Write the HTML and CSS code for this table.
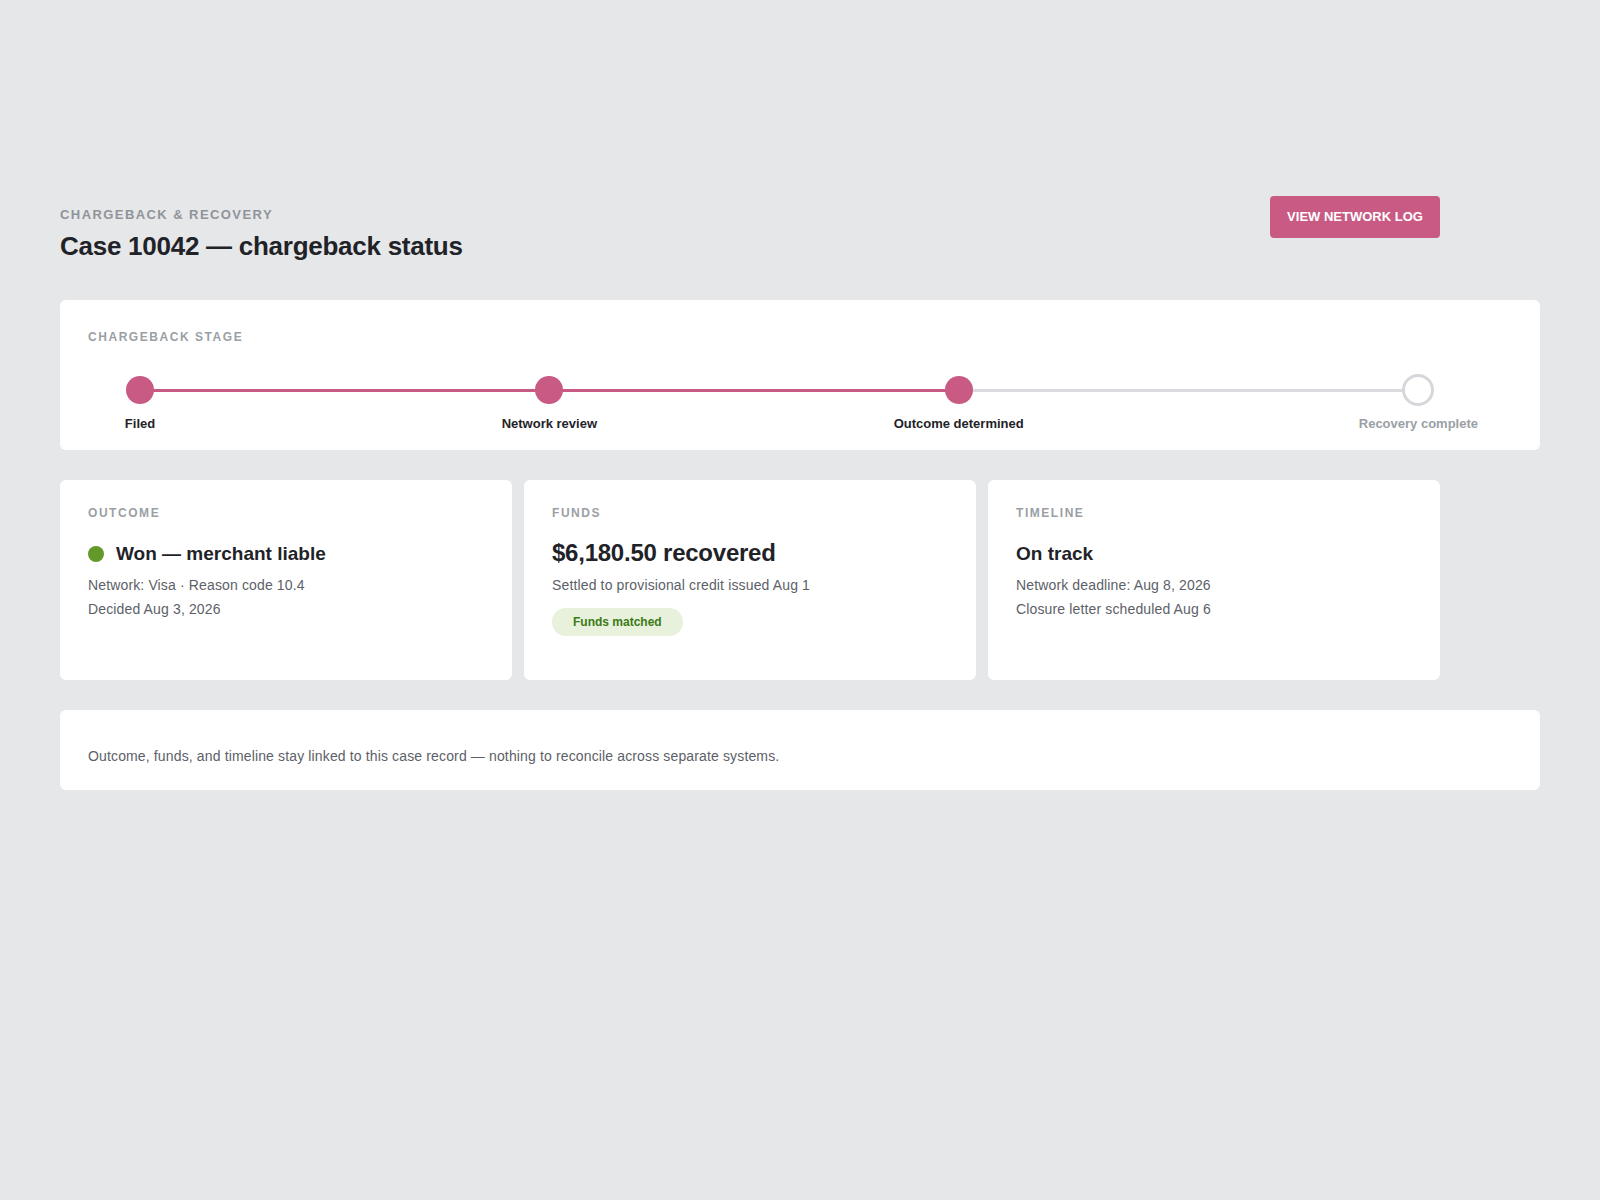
FILE: index.html
```html
<!DOCTYPE html>
<html lang="en">
<head>
<meta charset="utf-8">
<title>Case 10042 — chargeback status</title>
<link rel="stylesheet" href="styles.css">
</head>
<body>
<main class="page">
  <header class="header">
    <div class="header-text">
      <div class="kicker">CHARGEBACK &amp; RECOVERY</div>
      <h1 class="title">Case 10042 — chargeback status</h1>
    </div>
    <button class="btn-primary" type="button">VIEW NETWORK LOG</button>
  </header>

  <section class="panel stage-panel">
    <div class="eyebrow">CHARGEBACK STAGE</div>
    <div class="stepper">
      <div class="track"><div class="track-fill" style="width:64.05%"></div></div>
      <div class="step done">
        <div class="dot-row"><span class="circle"></span></div>
        <div class="step-label">Filed</div>
      </div>
      <div class="step done">
        <div class="dot-row"><span class="circle"></span></div>
        <div class="step-label">Network review</div>
      </div>
      <div class="step done">
        <div class="dot-row"><span class="circle"></span></div>
        <div class="step-label">Outcome determined</div>
      </div>
      <div class="step pending last">
        <div class="dot-row"><span class="circle"></span></div>
        <div class="step-label">Recovery complete</div>
      </div>
    </div>
  </section>

  <section class="cards">
    <article class="panel card">
      <div class="eyebrow">OUTCOME</div>
      <div class="card-title-row">
        <span class="status-dot"></span>
        <span class="card-title">Won — merchant liable</span>
      </div>
      <p class="card-text">Network: Visa · Reason code 10.4</p>
      <p class="card-text">Decided Aug 3, 2026</p>
    </article>
    <article class="panel card">
      <div class="eyebrow">FUNDS</div>
      <div class="card-title-row">
        <span class="card-amount">$6,180.50 recovered</span>
      </div>
      <p class="card-text">Settled to provisional credit issued Aug 1</p>
      <span class="pill">Funds matched</span>
    </article>
    <article class="panel card">
      <div class="eyebrow">TIMELINE</div>
      <div class="card-title-row">
        <span class="card-title">On track</span>
      </div>
      <p class="card-text">Network deadline: Aug 8, 2026</p>
      <p class="card-text">Closure letter scheduled Aug 6</p>
    </article>
  </section>

  <section class="panel note">
    <p class="note-text">Outcome, funds, and timeline stay linked to this case record — nothing to reconcile across separate systems.</p>
  </section>
</main>
</body>
</html>
```

FILE: styles.css
```css
* { box-sizing: border-box; }

html, body {
  margin: 0;
  padding: 0;
  background: #e6e7e9;
}

body {
  font-family: "Liberation Sans", Arial, sans-serif;
  color: #1f2328;
}

.page {
  padding: 196px 60px 60px;
}

.header {
  width: 1380px;
  display: flex;
  justify-content: space-between;
  align-items: flex-start;
}

.header-text {
  padding-top: 11px;
}

.kicker {
  font-size: 13px;
  line-height: 16px;
  font-weight: 700;
  letter-spacing: 0.11em;
  color: #8f949a;
}

.title {
  margin: 7px 0 0;
  font-size: 26px;
  line-height: 32px;
  font-weight: 700;
  letter-spacing: -0.01em;
  color: #1f2328;
}

.btn-primary {
  font-family: "Liberation Sans", Arial, sans-serif;
  font-size: 13px;
  line-height: 16px;
  font-weight: 700;
  color: #ffffff;
  background: #c85a84;
  border: 0;
  border-radius: 4px;
  padding: 13px 17px;
  width: 170px;
  height: 42px;
  cursor: pointer;
}

.panel {
  background: #ffffff;
  border-radius: 6px;
}

.eyebrow {
  font-size: 12px;
  line-height: 16px;
  font-weight: 700;
  letter-spacing: 1.55px;
  color: #9a9fa5;
}

/* Stage panel */
.stage-panel {
  margin-top: 38px;
  padding: 29px 28px 18px;
}

.stepper {
  position: relative;
  margin-top: 29px;
  display: grid;
  grid-template-columns: repeat(3, 1fr) 196px;
}

.track {
  position: absolute;
  left: 52px;
  right: 93.25px;
  top: 14.5px;
  height: 3px;
  background: #d9dbde;
}

.track-fill {
  height: 100%;
  background: #c85a84;
}

.step {
  position: relative;
  width: 104px;
  display: flex;
  flex-direction: column;
  align-items: center;
}

.step.last {
  width: auto;
  justify-self: end;
  margin-right: 34px;
}

.dot-row {
  height: 32px;
  display: flex;
  align-items: center;
  justify-content: center;
}

.circle {
  display: block;
  width: 28px;
  height: 28px;
  border-radius: 50%;
  background: #c85a84;
}

.step.pending .circle {
  box-sizing: content-box;
  width: 26px;
  height: 26px;
  background: #ffffff;
  border: 3px solid #d5d7db;
}

.step-label {
  margin-top: 10px;
  font-size: 13px;
  line-height: 16px;
  font-weight: 700;
  white-space: nowrap;
  color: #1f2328;
}

.step.pending .step-label {
  color: #9a9fa5;
}

/* Cards */
.cards {
  width: 1380px;
  margin-top: 30px;
  display: grid;
  grid-template-columns: repeat(3, 1fr);
  gap: 12px;
}

.card {
  min-height: 200px;
  padding: 25px 28px 24px;
}

.card-title-row {
  margin-top: 18px;
  height: 30px;
  display: flex;
  align-items: center;
  gap: 12px;
}

.status-dot {
  width: 16px;
  height: 16px;
  border-radius: 50%;
  background: #62992a;
  flex: none;
}

.card-title {
  font-size: 19px;
  line-height: 30px;
  font-weight: 700;
  color: #1f2328;
}

.card-amount {
  font-size: 24px;
  line-height: 26px;
  margin-bottom: 3px;
  font-weight: 700;
  letter-spacing: -0.01em;
  color: #1f2328;
}

.card-text {
  margin: 0;
  font-size: 14px;
  line-height: 23.5px;
  letter-spacing: 0.01em;
  color: #5c6168;
}

.card-title-row + .card-text {
  margin-top: 5px;
}

.pill {
  display: inline-block;
  margin-top: 10px;
  height: 28px;
  padding: 0 21px;
  border-radius: 14px;
  background: #e7f1dc;
  color: #3d7a16;
  font-size: 12px;
  line-height: 28px;
  font-weight: 700;
}

/* Note */
.note {
  margin-top: 30px;
  padding: 34px 28px 22px;
}

.note-text {
  margin: 0;
  font-size: 14px;
  line-height: 24px;
  letter-spacing: 0.01em;
  color: #5c6168;
}
```
